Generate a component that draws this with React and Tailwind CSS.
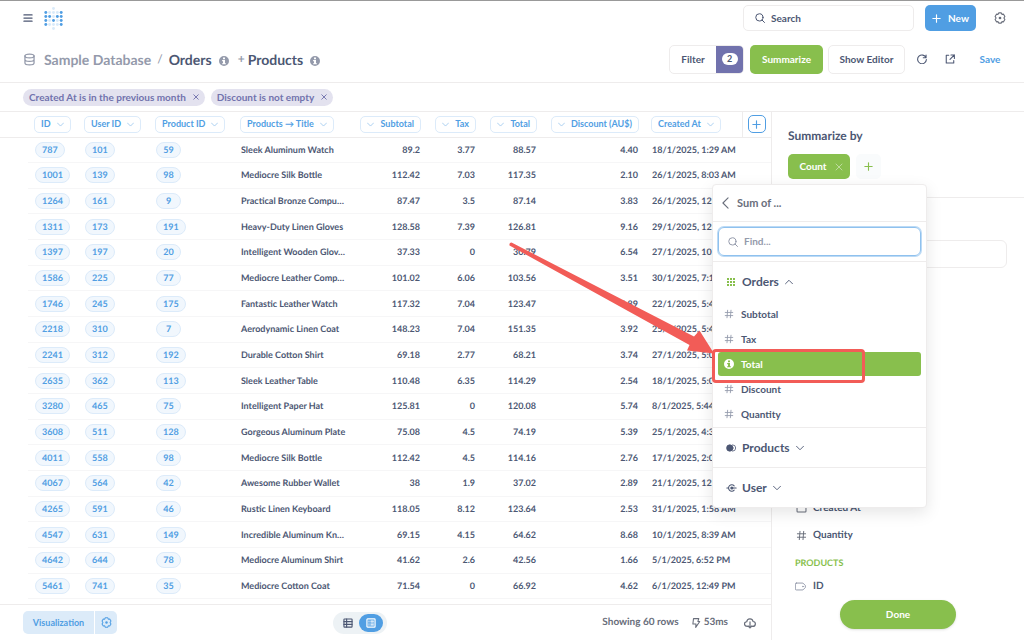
import React from "react";

const rows = [
  ["787", "101", "59", "Sleek Aluminum Watch", "89.2", "3.77", "88.57", "4.40", "18/1/2025, 1:29 AM"],
  ["1001", "139", "98", "Mediocre Silk Bottle", "112.42", "7.03", "117.35", "2.10", "26/1/2025, 8:03 AM"],
  ["1264", "161", "9", "Practical Bronze Compu…", "87.47", "3.5", "87.14", "3.83", "26/1/2025, 12:"],
  ["1311", "173", "191", "Heavy-Duty Linen Gloves", "128.58", "7.39", "126.81", "9.16", "29/1/2025, 12:"],
  ["1397", "197", "20", "Intelligent Wooden Glov…", "37.33", "0", "30.79", "6.54", "27/1/2025, 10:"],
  ["1586", "225", "77", "Mediocre Leather Comp…", "101.02", "6.06", "103.56", "3.51", "30/1/2025, 7:1"],
  ["1746", "245", "175", "Fantastic Leather Watch", "117.32", "7.04", "123.47", "4.89", "22/1/2025, 5:4"],
  ["2218", "310", "7", "Aerodynamic Linen Coat", "148.23", "7.04", "151.35", "3.92", "25/1/2025, 5:4"],
  ["2241", "312", "192", "Durable Cotton Shirt", "69.18", "2.77", "68.21", "3.74", "27/1/2025, 5:0"],
  ["2635", "362", "113", "Sleek Leather Table", "110.48", "6.35", "114.29", "2.54", "18/1/2025, 5:0"],
  ["3280", "465", "75", "Intelligent Paper Hat", "125.81", "0", "120.08", "5.74", "8/1/2025, 5:44"],
  ["3608", "511", "128", "Gorgeous Aluminum Plate", "75.08", "4.5", "74.19", "5.39", "25/1/2025, 4:3"],
  ["4011", "558", "98", "Mediocre Silk Bottle", "112.42", "4.5", "114.16", "2.76", "17/1/2025, 2:0"],
  ["4067", "564", "42", "Awesome Rubber Wallet", "38", "1.9", "37.02", "2.89", "21/1/2025, 12:"],
  ["4265", "591", "46", "Rustic Linen Keyboard", "118.05", "8.12", "123.64", "2.53", "31/1/2025, 1:58 AM"],
  ["4547", "631", "149", "Incredible Aluminum Kn…", "69.15", "4.15", "64.62", "8.68", "10/1/2025, 8:39 AM"],
  ["4642", "644", "78", "Mediocre Aluminum Shirt", "41.62", "2.6", "42.56", "1.66", "5/1/2025, 6:52 PM"],
  ["5461", "741", "35", "Mediocre Cotton Coat", "71.54", "0", "66.92", "4.62", "6/1/2025, 12:49 PM"],
  ["", "", "", "", "", "", "", "", ""],
];

const columns = [
  { name: "ID" },
  { name: "User ID" },
  { name: "Product ID" },
  { name: "Products → Title" },
  { name: "Subtotal", right: true },
  { name: "Tax", right: true },
  { name: "Total", right: true },
  { name: "Discount (AU$)", right: true },
  { name: "Created At" },
];

function Svg({ className = "", box = "0 0 16 16", width = 1.5, children }) {
  return (
    <svg
      className={"shrink-0 " + className}
      viewBox={box}
      fill="none"
      stroke="currentColor"
      strokeWidth={width}
      strokeLinecap="round"
      strokeLinejoin="round"
      aria-hidden="true"
    >
      {children}
    </svg>
  );
}

const ChevronDown = ({ className }) => (
  <Svg className={className} width={1.8}><path d="M1 4.500l7 7 7-7" /></Svg>
);
const Plus = ({ className, width = 2 }) => (
  <Svg className={className} width={width}><path d="M8 1.500v13M1.500 8h13" /></Svg>
);
const Cross = ({ className, width = 2 }) => (
  <Svg className={className} width={width}><path d="M2 2l12 12M14 2L2 14" /></Svg>
);
const SearchIcon = ({ className }) => (
  <Svg className={className} width={1.6}><circle cx="7" cy="7" r="5.8" /><path d="M11.200 11.200l4 4" /></Svg>
);
const InfoIcon = ({ className }) => (
  <svg className={"shrink-0 " + className} viewBox="0 0 16 16" aria-hidden="true">
    <path
      fill="currentColor"
      fillRule="evenodd"
      d="M8 0a8 8 0 1 1 0 16A8 8 0 0 1 8 0zM6.400 2.400v2.800h3.200V2.400zM5 6.400v1.800h1.400v3.200H5V13.200h6v-1.800H9.600V6.400z"
    />
  </svg>
);
const Gear = ({ className }) => (
  <Svg className={className} width={1.500}>
    <path d="M6.300 1.200h3.400l.9 1.900 2.100-.2 1.800 3L13.200 8l1.300 2.100-1.800 3-2.100-.2-.9 1.900H6.300l-.9-1.900-2.100.2-1.800-3L2.800 8 1.500 5.900l1.800-3 2.100.2z" />
    <circle cx="8" cy="8" r="1.800" fill="currentColor" stroke="none" />
  </Svg>
);
const Hash = ({ className }) => (
  <Svg className={className} width={1.400}><path d="M5.800 2L4.800 14M11.200 2l-1 12M2 5.500h12M2 10.500h12" /></Svg>
);
const TableIcon = ({ className }) => (
  <Svg className={className} width={1.800}><rect x="1.500" y="1.500" width="13" height="13" rx="1" /><path d="M1.500 5.800h13M1.500 10.200h13M5.800 1.500v13" /></Svg>
);
const DetailIcon = ({ className }) => (
  <Svg className={className} width={1.900}><rect x="1.500" y="1.500" width="13" height="13" rx="1" /><path d="M4.600 5h.3M4.600 8h.3M4.600 11h.3M7.800 5h4M7.800 8h4M7.800 11h4" /></Svg>
);

const darkDots = ["0,1", "4,1", "0,2", "1,2", "3,2", "4,2", "0,3", "2,3", "4,3", "0,4", "4,4"];
function Logo() {
  const dots = [[2, 0], [2, 5]];
  for (let y = 1; y < 5; y++) for (let x = 0; x < 5; x++) dots.push([x, y]);
  return (
    <svg className="h-[23px] w-[19px]" viewBox="0 0 19 23" aria-hidden="true">
      {dots.map(([x, y]) => (
        <circle
          key={x + "," + y}
          cx={1.8 + x * 3.850}
          cy={1.500 + y * 4}
          r="1.450"
          fill="#509ee3"
          opacity={darkDots.includes(x + "," + y) ? 1 : 0.22}
        />
      ))}
    </svg>
  );
}

function Pill({ children }) {
  return (
    <a href="#" className="inline-block min-w-[25px] rounded-full border border-[#dcebfa] bg-[#f1f7fd] px-[6px] text-center align-middle leading-[14px] text-[#509ee3]">
      {children || "\u00a0"}
    </a>
  );
}

function Results() {
  return (
    <div className="min-h-0 flex-1 overflow-hidden">
      <table className="h-[513px] w-full table-fixed border-collapse text-[9px] leading-[14px] font-bold">
        <colgroup>
          <col className="w-[28px]" />
          <col className="w-[50px]" />
          <col className="w-[71px]" />
          <col className="w-[85px]" />
          <col className="w-[119px]" />
          <col className="w-[74px]" />
          <col className="w-[55px]" />
          <col className="w-[61px]" />
          <col className="w-[102px]" />
          <col className="w-[97px]" />
          <col />
        </colgroup>
        <thead>
          <tr className="h-[25px] border-b border-[#eeecec]">
            <td />
            {columns.map((c) => (
              <th key={c.name} scope="col" className={"p-0 px-[6px] whitespace-nowrap " + (c.right ? "text-right" : "text-left")}>
                <button
                  type="button"
                  className={
                    "inline-flex h-[17px] items-center gap-[6px] rounded-[5px] border border-[#dcebfa] px-[6px] align-middle text-[#509ee3] " +
                    (c.right ? "flex-row-reverse" : "")
                  }
                >
                  {c.name}
                  <ChevronDown className="size-[7px] opacity-60" />
                </button>
              </th>
            ))}
            <th className="border-l border-[#eeecec] p-0">
              <button type="button" aria-label="Add column" className="inline-flex size-[18px] items-center justify-center rounded-[5px] border border-[#509ee3] align-middle text-[#509ee3]">
                <Plus className="size-[9px]" />
              </button>
            </th>
          </tr>
        </thead>
        <tbody>
          {rows.map((r, n) => (
            <tr key={n}>
              <td />
              {r.map((v, i) => (
                <td
                  key={i}
                  className={
                    "border-b border-[#f6f6f7] p-0 px-[7px] whitespace-nowrap " +
                    (columns[i].right ? "text-right" : "text-left")
                  }
                >
                  {i < 3 ? <Pill>{v}</Pill> : v}
                </td>
              ))}
              <td className="border-b border-[#f6f6f7]" />
            </tr>
          ))}
        </tbody>
      </table>
    </div>
  );
}

function Footer() {
  return (
    <footer className="flex h-9 shrink-0 items-center justify-between border-t border-[#eeecec] pr-[15px] pl-[23px] font-bold text-[#696e7b]">
      <div className="flex h-[23px] overflow-hidden rounded-[5px] text-[#509ee3]">
        <button type="button" className="w-[71px] bg-[#dcebf9] text-[9px]">Visualization</button>
        <button type="button" aria-label="Visualization settings" className="flex w-[23px] items-center justify-center border-l border-white bg-[#dcebf9]">
          <Gear className="size-[11px]" />
        </button>
      </div>
      <div className="flex h-[22px] w-[54px] items-center rounded-full bg-[#edf2f5] pr-1">
        <button type="button" aria-label="Table" className="flex flex-1 justify-center text-[#4c5773]"><TableIcon className="ml-1 size-[10px]" /></button>
        <button type="button" aria-label="Detail" className="flex h-[18px] w-6 items-center justify-center rounded-full bg-[#509ee3] text-white"><DetailIcon className="size-[10px]" /></button>
      </div>
      <div className="flex items-center">
        <span>Showing 60 rows</span>
        <Svg className="ml-3 size-[10px]" width={1.700}><path d="M4 1h8.500l-1.500 4.500h3L7.500 15l.5-5.500H3z" /></Svg>
        <span className="ml-[3px]">53ms</span>
        <button type="button" aria-label="Download" className="ml-4">
          <Svg className="size-3" width={1.600}><path d="M4.500 12.500c-5 0-5-6-.8-6.200C4.200 1.500 11.200 1.200 12 6c4.500.5 4 6.500-.5 6.500M8 6.500v8M5.500 12L8 14.500l2.500-2.500" /></Svg>
        </button>
      </div>
    </footer>
  );
}

function FieldOption({ name, selected }) {
  return (
    <button
      type="button"
      className={
        "mb-px flex h-6 w-full items-center gap-[7px] rounded-[3px] pl-[6px] text-left " +
        (selected ? "bg-[#88bf4d] text-white" : "")
      }
    >
      {selected ? <InfoIcon className="size-[10px]" /> : <Hash className="size-[10px] text-[#949aab]" />}
      {name}
    </button>
  );
}

function AggregationMenu() {
  return (
    <div className="absolute top-[72px] left-[-60px] z-10 w-[215px] rounded-[4px] border border-[#eeecec] bg-white font-bold shadow-[0_5px_16px_rgba(0,0,0,0.1)]">
      <button type="button" className="flex h-[37px] w-full items-center gap-2 border-b border-[#eeecec] pl-[9px] text-[11px] text-[#696e7b]">
        <Svg className="h-3 w-[7px]" box="0 0 8 14" width={1.300}><path d="M7 1L1 7l6 6" /></Svg>
        Sum of ...
      </button>
      <div className="border-b border-[#eeecec] p-[5px]">
        <label className="flex h-[29px] items-center gap-[6px] rounded-[6px] border border-[#8fc1ee] pl-[9px] text-[#949aab] ring-1 ring-[#bcdaf5]">
          <SearchIcon className="size-[10px]" />
          <input type="text" placeholder="Find..." aria-label="Find a column" className="w-full bg-transparent outline-none placeholder:text-[#949aab]" />
        </label>
      </div>
      <button type="button" className="flex h-10 w-full items-center pl-[14px] text-[12px]">
        <svg className="size-2 text-[#88bf4d]" viewBox="0 0 8 8" fill="currentColor" aria-hidden="true">
          {[0, 3, 6].map((x) => [0, 3, 6].map((y) => <rect key={x + "-" + y} x={x} y={y} width="2" height="2" />))}
        </svg>
        <span className="ml-[7px]">Orders</span>
        <ChevronDown className="ml-[6px] size-2 rotate-180" />
      </button>
      <div className="border-b border-[#eeecec] px-[5px]">
        {["Subtotal", "Tax", "Total", "Discount", "Quantity"].map((n) => (
          <FieldOption key={n} name={n} selected={n === "Total"} />
        ))}
      </div>
      <button type="button" className="flex h-10 w-full items-center border-b border-[#eeecec] pl-[13px] text-[12px]">
        <Svg className="h-2 w-[11px]" box="0 0 16 12" width={1.200}><circle cx="5.500" cy="6" r="4.800" fill="currentColor" /><path d="M9.500 1.200a4.800 4.800 0 1 1 0 9.600" /></Svg>
        <span className="ml-[5px]">Products</span>
        <ChevronDown className="ml-[6px] size-2" />
      </button>
      <button type="button" className="flex h-[39px] w-full items-center pl-[13px] text-[12px]">
        <Svg className="h-2 w-[11px]" box="0 0 16 12" width={1.600}><path d="M1 6h2.500M9 6h6M12 2.800A4.800 4.800 0 1 0 12 9.200" /><circle cx="8.500" cy="6" r="1.500" fill="currentColor" /></Svg>
        <span className="ml-[5px]">User</span>
        <ChevronDown className="ml-[6px] size-2" />
      </button>
    </div>
  );
}

function Annotation() {
  return (
    <>
      <svg className="absolute top-[130px] left-[-264px] z-20 h-[116px] w-[210px]" viewBox="0 0 210 116" fill="#f25c57" aria-hidden="true">
        <path d="M3.500 .5L186 94.500l5.500-6L206 111.500 179 108.500l2.500-5.500L1.500 3.500Q1 .5 3.500 .5z" />
      </svg>
      <div className="absolute top-[237px] left-[-60px] z-20 h-[34px] w-[153px] rounded-[4px] border-3 border-[#f25c57]" />
    </>
  );
}

function Sidebar() {
  return (
    <aside className="relative flex w-[253px] shrink-0 flex-col border-l border-[#eeecec] font-bold">
      <div className="border-b border-[#eeecec] px-4 pt-4 pb-[18px]">
        <h2 className="text-[12px] leading-4">Summarize by</h2>
        <div className="mt-[10px] flex items-center gap-[6px]">
          <button type="button" className="flex h-[25px] w-[62px] items-center justify-center gap-2 rounded-[5px] bg-[#88bf4d] pl-1 text-white">
            Count <Cross className="size-2 opacity-60" width={1.500} />
          </button>
          <button type="button" aria-label="Add metric" className="flex size-[25px] items-center justify-center rounded-[5px] bg-[#f9fbfc] text-[#88bf4d]">
            <Plus className="size-[9px]" />
          </button>
        </div>
      </div>
      <div className="px-4 pt-[42px]">
        <input type="text" aria-label="Find a grouping" className="h-7 w-full max-w-[219px] rounded-[6px] border border-[#eeecec]" />
      </div>
      <ul className="mt-[227px] ml-6">
        <li className="flex h-[27px] items-center gap-[6px]">
          <Svg className="size-[11px] text-[#696e7b]"><rect x="1.500" y="2" width="13" height="11" rx="1" /></Svg>Created At
        </li>
        <li className="flex h-[27px] items-center gap-[6px]"><Hash className="size-[11px] text-[#696e7b]" />Quantity</li>
      </ul>
      <h3 className="mt-[6px] ml-[23px] text-[9px] leading-4 text-[#88bf4d]">PRODUCTS</h3>
      <div className="mt-[7px] ml-[23px] flex h-4 items-center gap-[7px]">
        <Svg className="size-[11px] text-[#949aab]" width={1.400}><path d="M2 3h9.500L15 6.500v3L11.500 13H2a1.500 1.500 0 0 1-1.500-1.500v-7A1.500 1.500 0 0 1 2 3z" /><circle cx="11.500" cy="8" r=".5" /></Svg>ID
      </div>
      <button type="button" className="absolute bottom-[11px] left-1/2 h-[29px] w-[116px] -translate-x-1/2 rounded-full bg-[#88bf4d] text-white shadow-sm">Done</button>
      <AggregationMenu />
      <Annotation />
    </aside>
  );
}

function FilterChip({ children }) {
  return (
    <button type="button" className="flex h-[17px] items-center gap-[7px] rounded-full bg-[#e3e2ef] px-[6px] font-bold text-[#7172ad]">
      {children}
      <Cross className="size-[6px]" width={2.500} />
    </button>
  );
}

export default function App() {
  return (
    <div className="flex h-screen flex-col overflow-hidden border-t border-[#999] bg-white font-[Lato,sans-serif] text-[10px] text-[#4c5773] [text-rendering:geometricPrecision]">
      <nav className="flex h-[34px] shrink-0 items-center pr-[18px] pl-[23px] font-bold">
        <button type="button" aria-label="Menu">
          <Svg className="size-[10px]" width={2}><path d="M1.500 3h13M1.500 8h13M1.500 13h13" /></Svg>
        </button>
        <a href="#" aria-label="Home" className="ml-[11px]"><Logo /></a>
        <label className="ml-auto flex h-[26px] w-[171px] items-center gap-[6px] rounded-[5px] border border-[#eeecec] pl-[11px]">
          <SearchIcon className="size-[10px]" />
          <input type="search" aria-label="Search" placeholder="Search" className="w-full bg-transparent outline-none placeholder:text-[#4c5773]" />
        </label>
        <button type="button" className="ml-[11px] flex h-[26px] w-[51px] items-center justify-center gap-[7px] rounded-[5px] bg-[#509ee3] text-white">
          <Plus className="size-[9px]" />New
        </button>
        <button type="button" aria-label="Settings" className="ml-[18px] text-[#696e7b]"><Gear className="size-3" /></button>
      </nav>
      <header className="flex h-12 shrink-0 items-center border-b border-[#eeecec] pr-[21px] pl-6 font-bold">
        <h1 className="flex items-center pt-px text-[14px]">
          <Svg className="h-[13px] w-[11px] text-[#949aab]" box="0 0 14 16" width={1.600}>
            <ellipse cx="7" cy="3.500" rx="5.800" ry="2.400" /><path d="M1.200 3.500v9c0 1.400 2.600 2.400 5.800 2.400s5.800-1 5.800-2.400v-9M1.200 8c0 1.400 2.600 2.400 5.800 2.400s5.800-1 5.800-2.400" />
          </Svg>
          <a href="#" className="ml-[9px] text-[#949aab]">Sample Database</a>
          <span className="mx-[6px] text-[12px] font-normal text-[#949aab]">/</span>
          <a href="#">Orders</a>
          <InfoIcon className="mt-[3px] ml-[7px] size-[10px] text-[#949aab]" />
          <span className="ml-[9px] text-[12px] text-[#949aab]">+</span>
          <a href="#" className="ml-[3px]">Products</a>
          <InfoIcon className="mt-[3px] ml-[7px] size-[10px] text-[#949aab]" />
        </h1>
        <div className="ml-auto flex items-center pt-px">
          <div className="flex h-[29px] overflow-hidden rounded-[5px] border border-[#eeecec]">
            <button type="button" className="w-[46px]">Filter</button>
            <button type="button" aria-label="2 filters" className="flex w-[27px] items-center justify-center bg-[#7172ad]">
              <span className="flex h-3 w-4 items-center justify-center rounded-full bg-white text-[9px] text-[#4c5773]">2</span>
            </button>
          </div>
          <button type="button" className="ml-[6px] h-[29px] w-[73px] rounded-[5px] bg-[#88bf4d] text-white">Summarize</button>
          <button type="button" className="ml-[5px] h-[29px] w-[77px] rounded-[5px] border border-[#eeecec]">Show Editor</button>
          <button type="button" aria-label="Refresh" className="ml-3">
            <Svg className="size-[10px]" width={1.700}><path d="M14.500 1.500v4.500H10M14.500 6A7 7 0 1 0 15 9" /></Svg>
          </button>
          <button type="button" aria-label="Share" className="ml-[18px]">
            <Svg className="size-[10px]" width={1.700}><path d="M6 2H2v12.500h12V10.500M9.500 1.500H15V7M15 1.500L8 8.500" /></Svg>
          </button>
          <button type="button" className="ml-[22px] w-[26px] text-[#509ee3]">Save</button>
        </div>
      </header>
      <div className="flex h-[29px] shrink-0 items-center gap-[6px] border-b border-[#eeecec] px-[23px]">
        <FilterChip>Created At is in the previous month</FilterChip>
        <FilterChip>Discount is not empty</FilterChip>
      </div>
      <main className="flex min-h-0 flex-1">
        <section className="flex min-w-0 flex-1 flex-col">
          <Results />
          <Footer />
        </section>
        <Sidebar />
      </main>
    </div>
  );
}
